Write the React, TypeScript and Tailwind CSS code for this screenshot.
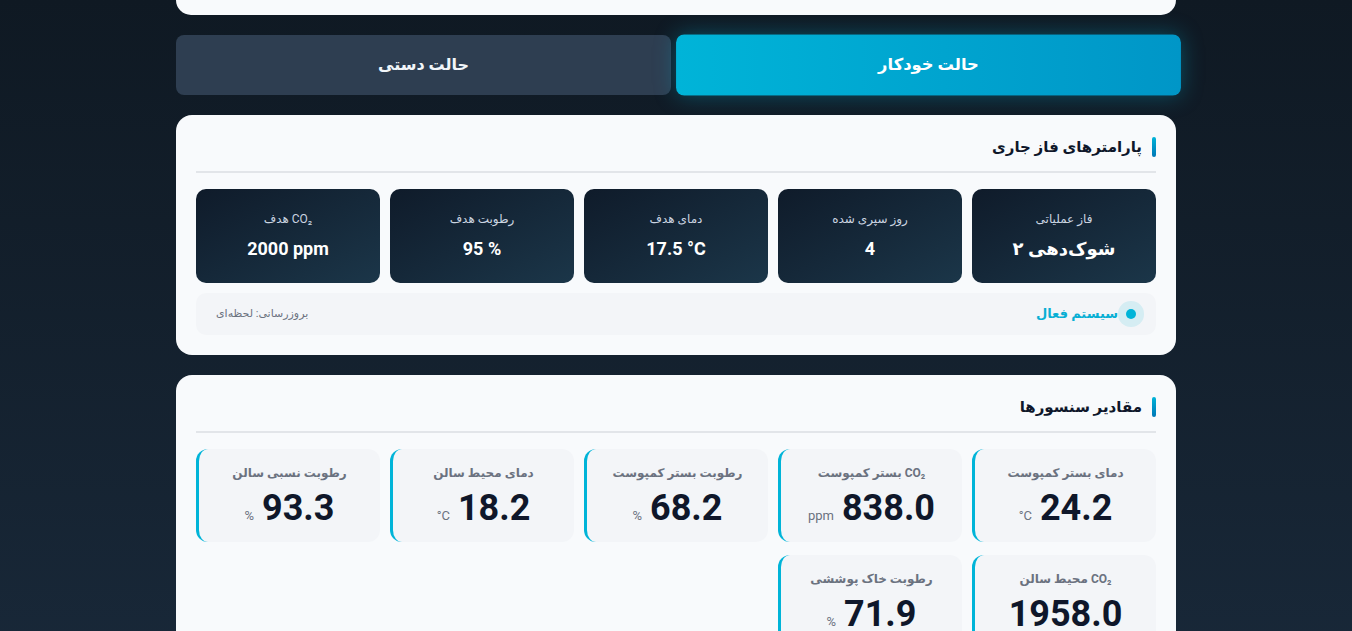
import React from 'react';

type Param = { label: string; value: string };
type Sensor = { label: string; value: string; unit: string; wrapUnit?: boolean };

const params: Param[] = [
  { label: 'فاز عملیاتی', value: 'شوک‌دهی ۲' },
  { label: 'روز سپری شده', value: '4' },
  { label: 'دمای هدف', value: '17.5 °C' },
  { label: 'رطوبت هدف', value: '95 %' },
  { label: 'CO₂ هدف', value: '2000 ppm' },
];

const sensors: Sensor[] = [
  { label: 'دمای بستر کمپوست', value: '24.2', unit: '°C' },
  { label: 'CO₂ بستر کمپوست', value: '838.0', unit: 'ppm' },
  { label: 'رطوبت بستر کمپوست', value: '68.2', unit: '%' },
  { label: 'دمای محیط سالن', value: '18.2', unit: '°C' },
  { label: 'رطوبت نسبی سالن', value: '93.3', unit: '%' },
  { label: 'CO₂ محیط سالن', value: '1958.0', unit: 'ppm', wrapUnit: true },
  { label: 'رطوبت خاک پوششی', value: '71.9', unit: '%' },
];

const SectionTitle: React.FC<{ title: string }> = ({ title }) => (
  <div className="flex items-center gap-2.5 pb-3 border-b-2 border-[#e2e5e9]">
    <span className="w-1 h-5 rounded-sm bg-gradient-to-b from-[#00b4d8] to-[#0077b6]" />
    <h2 className="text-[15px] leading-6 font-bold text-[#0f172a]">{title}</h2>
  </div>
);

export default function App() {
  return (
    <div
      dir="rtl"
      className="min-h-screen bg-gradient-to-b from-[#0f1923] to-[#19293a]"
      style={{ fontFamily: 'Roboto, "DejaVu Sans", sans-serif' }}
    >
      <div className="w-[1000px] mx-auto pb-10">
        {/* Header card (scrolled off) */}
        <div className="h-[15px] bg-[#f8fafc] rounded-b-2xl" />

        {/* Mode tabs */}
        <div className="grid grid-cols-2 gap-2.5 mt-5">
          <button className="h-[60px] rounded-lg bg-gradient-to-r from-[#00b4d8] to-[#0096c7] text-white text-[16px] font-bold scale-[1.02] shadow-[0_0_22px_rgba(0,180,216,0.35)]">
            حالت خودکار
          </button>
          <button className="h-[60px] rounded-lg bg-[#2e3e51] text-[#f1f5f9] text-[16px] font-bold">
            حالت دستی
          </button>
        </div>

        {/* Current phase params */}
        <div className="mt-5 bg-[#f8fafc] rounded-2xl p-5">
          <SectionTitle title="پارامترهای فاز جاری" />
          <div className="grid grid-cols-5 gap-2.5 mt-4">
            {params.map((p) => (
              <div
                key={p.label}
                className="h-[94px] rounded-[10px] bg-gradient-to-br from-[#0f1b2a] to-[#1b3649] flex flex-col items-center justify-center gap-2.5"
              >
                <span className="text-[12px] leading-4 text-[#cbd5e1]">{p.label}</span>
                <span dir={/[0-9]/.test(p.value) ? 'ltr' : 'rtl'} className="text-[18px] leading-6 font-bold text-white">
                  {p.value}
                </span>
              </div>
            ))}
          </div>
          <div className="mt-2.5 h-[42px] rounded-[10px] bg-[#f3f5f8] flex items-center justify-between pr-5 pl-5">
            <div className="flex items-center gap-2">
              <span className="w-2.5 h-2.5 rounded-full bg-[#00b4d8] shadow-[0_0_0_8px_rgba(0,180,216,0.12)]" />
              <span className="text-[13px] font-bold text-[#08afd4]">سیستم فعال</span>
            </div>
            <span className="text-[11px] text-[#6b7280]">بروزرسانی: لحظه‌ای</span>
          </div>
        </div>

        {/* Sensor values */}
        <div className="mt-5 bg-[#f8fafc] rounded-2xl p-5">
          <SectionTitle title="مقادیر سنسورها" />
          <div className="grid grid-cols-5 gap-x-2.5 gap-y-[13px] mt-4">
            {sensors.map((s) => (
              <div
                key={s.label}
                className="h-[93px] rounded-xl bg-[#f3f5f8] border-l-[3px] border-[#00b4d8] flex flex-col items-center gap-1.5 px-3 pt-[15px]"
              >
                <span className="text-[12px] leading-[18px] font-bold text-[#6b7280]">{s.label}</span>
                <div className="flex flex-wrap items-baseline justify-center gap-x-2">
                  <span className="text-[36px] leading-10 font-bold text-[#0f172a]">{s.value}</span>
                  <span
                    dir="ltr"
                    className={
                      s.wrapUnit
                        ? 'basis-full text-center text-[13px] text-[#6b7280]'
                        : 'text-[13px] text-[#6b7280]'
                    }
                  >
                    {s.unit}
                  </span>
                </div>
              </div>
            ))}
          </div>
        </div>
      </div>
    </div>
  );
}
